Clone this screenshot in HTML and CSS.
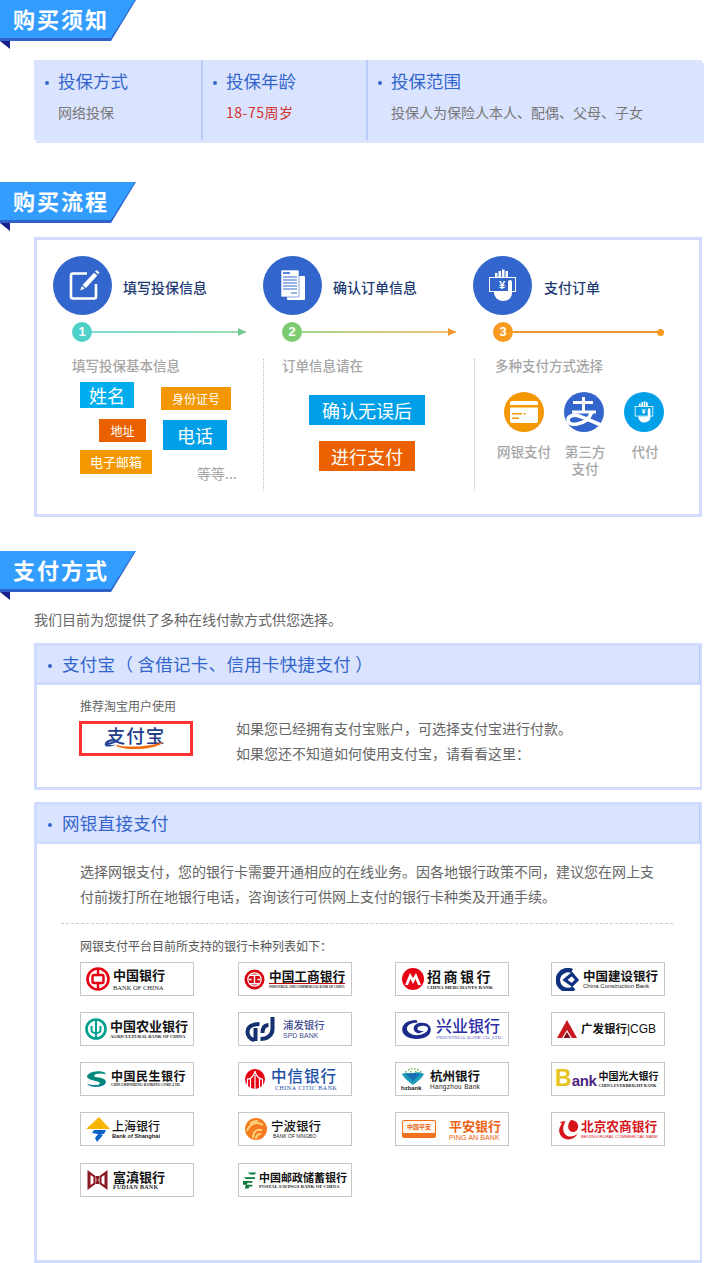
FILE: index.html
```html
<!DOCTYPE html>
<html lang="zh">
<head>
<meta charset="utf-8">
<title>购买须知</title>
<link rel="stylesheet" href="styles.css">
</head>
<body>
<section class="sec sec-notice">
  <div class="ribbon"><h2 class="ribbon-face">购买须知</h2></div>
  <div class="fold"></div>
  <div class="info">
    <div class="info-col c1"><h3 class="info-title"><i class="dot"></i>投保方式</h3><p class="info-text">网络投保</p></div>
    <div class="info-col c2"><h3 class="info-title"><i class="dot"></i>投保年龄</h3><p class="info-text red">18-75周岁</p></div>
    <div class="info-col c3"><h3 class="info-title"><i class="dot"></i>投保范围</h3><p class="info-text">投保人为保险人本人、配偶、父母、子女</p></div>
  </div>
</section>

<section class="sec sec-flow">
  <div class="ribbon"><h2 class="ribbon-face">购买流程</h2></div>
  <div class="fold"></div>
  <div class="flow">
    <div class="step">
      <div class="step-head">
        <div class="circle">
          <svg viewBox="0 0 59 59" width="59" height="59"><path d="M34 17.500H20a2 2 0 0 0-2 2v21a2 2 0 0 0 2 2h21a2 2 0 0 0 2-2V28" fill="none" stroke="#fff" stroke-width="2.600"/><path d="M42 15.500l1.500-1.500 3 2.500-1.500 1.700zM41 16.700l3.300 2.800L33 32l-3.500-3zM28.800 30l3 2.600-4.600 1.900z" fill="#fff"/></svg>
        </div>
        <b class="step-title">填写投保信息</b>
      </div>
      <div class="progress">
        <span class="num n1">1</span><span class="line l1"><i class="arrow a1"></i></span>
      </div>
      <div class="step-body first">
        <p class="step-sub">填写投保基本信息</p>
        <span class="tag t-name">姓名</span>
        <span class="tag t-id">身份证号</span>
        <span class="tag t-addr">地址</span>
        <span class="tag t-tel">电话</span>
        <span class="tag t-mail">电子邮箱</span>
        <span class="etc">等等...</span>
      </div>
    </div>
    <div class="step">
      <div class="step-head">
        <div class="circle">
          <svg viewBox="0 0 59 59" width="59" height="59"><rect x="24" y="20" width="18" height="24" rx="1" fill="#fff"/><rect x="18" y="14" width="18" height="27" rx="1" fill="#fff" stroke="#3366cc" stroke-width=".6"/><path d="M20 17h7" stroke="#3366cc" stroke-width="1.600"/><path d="M20 21h14M20 24h14M20 27h14M20 30h14M20 33h14M28 37h6" stroke="#3366cc" stroke-width="1"/></svg>
        </div>
        <b class="step-title">确认订单信息</b>
      </div>
      <div class="progress">
        <span class="num n2">2</span><span class="line l2"><i class="arrow a2"></i></span>
      </div>
      <div class="step-body">
        <p class="step-sub">订单信息请在</p>
        <div class="confirm">
          <span class="btn b-confirm">确认无误后</span>
          <span class="btn b-pay">进行支付</span>
        </div>
      </div>
    </div>
    <div class="step">
      <div class="step-head">
        <div class="circle">
          <svg viewBox="0 0 59 59" width="59" height="59"><path d="M22 21v-4h2.500v4zM25.500 21v-6H28v6zM29 21v-7.500h2.500V21zM32.500 21v-6H35v6z" fill="#fff"/><rect x="16.500" y="21.500" width="26" height="14" fill="none" stroke="#fff" stroke-width="1"/><path d="M21 36h14V26a2 2 0 0 1 4 0v11c0 5-4 8-9 8s-9-4-9-9z" fill="#fff"/><text x="29" y="33" class="yen">¥</text></svg>
        </div>
        <b class="step-title title-pay">支付订单</b>
      </div>
      <div class="progress p3">
        <span class="num n3">3</span><span class="line l3"><i class="enddot"></i></span>
      </div>
      <div class="step-body last">
        <p class="step-sub">多种支付方式选择</p>
        <div class="methods">
          <div class="method m1">
            <svg viewBox="0 0 40 40" width="40" height="40"><circle cx="20" cy="20" r="20" fill="#f39800"/><rect x="6" y="9" width="28" height="22" rx="2" fill="#fff"/><path d="M6 13h28v2.500H6z" fill="#f39800"/><path d="M8 21h10v1.500H8zM19.500 21h2v1.500h-2zM8 25.500h7V27H8z" fill="#f39800"/></svg>
            <span class="m-label">网银支付</span>
          </div>
          <div class="method m2">
            <svg viewBox="0 0 40 40" width="40" height="40"><circle cx="20" cy="20" r="20" fill="#3366cc"/><g fill="none" stroke="#fff"><path d="M9 10.500h20" stroke-width="3"/><path d="M19.500 5v15M8 20h24" stroke-width="3"/><path d="M28 20c-3 7-8 11-15 12-6 1-9-1-9-4 0-4 6-6 11-4 6 2 15 6 24 10" stroke-width="3.600"/></g></svg>
            <span class="m-label">第三方<br>支付</span>
          </div>
          <div class="method m3">
            <svg viewBox="0 0 40 40" width="40" height="40"><circle cx="20" cy="20" r="20" fill="#00a0e9"/><g transform="scale(.678)"><path d="M22 21v-4h2.500v4zM25.500 21v-6H28v6zM29 21v-7.500h2.500V21zM32.500 21v-6H35v6z" fill="#fff"/><rect x="16.500" y="21.500" width="26" height="14" fill="none" stroke="#fff" stroke-width="1.200"/><path d="M21 36h14V26a2 2 0 0 1 4 0v11c0 5-4 8-9 8s-9-4-9-9z" fill="#fff"/><text x="29" y="33" class="yen">¥</text></g></svg>
            <span class="m-label">代付</span>
          </div>
        </div>
      </div>
    </div>
  </div>
</section>

<section class="sec sec-pay">
  <div class="ribbon"><h2 class="ribbon-face">支付方式</h2></div>
  <div class="fold"></div>
  <p class="pay-intro">我们目前为您提供了多种在线付款方式供您选择。</p>

  <div class="paybox alipay">
    <h3 class="paybox-head"><i class="dot"></i>支付宝（ 含借记卡、信用卡快捷支付 ）</h3>
    <div class="alipay-body">
      <div class="alipay-left">
        <p class="alipay-note">推荐淘宝用户使用</p>
        <div class="alipay-logo">
          <span class="alipay-word">支付宝</span>
          <svg class="swoosh" viewBox="0 0 68 12" width="64" height="11"><path d="M14 7c8 4 32 3 52-3-8 8-38 11-52 5z" fill="#f26a10"/><path d="M14 3C8-1 1 3 1 7c0 3 5 3 13 0-6 1-9 1-9-1 0-2 4-3 9-1z" fill="#24489a"/></svg>
        </div>
      </div>
      <div class="alipay-text">
        <p>如果您已经拥有支付宝账户，可选择支付宝进行付款。</p>
        <p>如果您还不知道如何使用支付宝，请看看这里：</p>
      </div>
    </div>
  </div>

  <div class="paybox netbank">
    <h3 class="paybox-head"><i class="dot"></i>网银直接支付</h3>
    <p class="net-text">选择网银支付，您的银行卡需要开通相应的在线业务。因各地银行政策不同，建议您在网上支付前拨打所在地银行电话，咨询该行可供网上支付的银行卡种类及开通手续。</p>
    <p class="net-list">网银支付平台目前所支持的银行卡种列表如下：</p>
    <div class="banks">
      <div class="bank boc">
        <svg viewBox="0 0 24 24" width="24" height="24"><circle cx="12" cy="12" r="10.500" fill="none" stroke="#e60012" stroke-width="2.600"/><rect x="6.500" y="8" width="11" height="8" rx="1.500" fill="none" stroke="#e60012" stroke-width="2.400"/><path d="M12 1v7M12 16v7" stroke="#e60012" stroke-width="2.400"/></svg>
        <div class="b-text"><b class="cn">中国银行</b><span class="en">BANK OF CHINA</span></div>
      </div>
      <div class="bank icbc">
        <svg viewBox="0 0 22 22" width="21" height="21"><circle cx="11" cy="11" r="10.500" fill="#d7000f"/><circle cx="11" cy="11" r="7" fill="none" stroke="#fff" stroke-width="1.300"/><path d="M6 6.500h10M11 6.500v9M6 15.500h10M5 11h3M14 11h3" stroke="#fff" stroke-width="1.500" fill="none"/></svg>
        <div class="b-text"><b class="cn">中国工商银行</b><span class="en rule">INDUSTRIAL AND COMMERCIAL BANK OF CHINA</span></div>
      </div>
      <div class="bank cmb">
        <svg viewBox="0 0 22 22" width="22" height="22"><circle cx="11" cy="11" r="11" fill="#e60012"/><path d="M3 17L8 5l3 5 3-5 5 12h-3l-2.500-6-2.500 5-2.500-5L6 17z" fill="#fff"/></svg>
        <div class="b-text"><b class="cn">招商银行</b><span class="en">CHINA MERCHANTS BANK</span></div>
      </div>
      <div class="bank ccb">
        <svg viewBox="0 0 23 23" width="23" height="23"><path d="M16 3A10 10 0 1 0 18 20" fill="none" stroke="#0f2f7f" stroke-width="4.500"/><path d="M16 6l-7 6 7 5 5-5z" fill="none" stroke="#0f2f7f" stroke-width="3.200"/></svg>
        <div class="b-text"><b class="cn">中国建设银行</b><span class="en sans">China Construction Bank</span></div>
      </div>

      <div class="bank abc">
        <svg viewBox="0 0 22 22" width="22" height="22"><circle cx="11" cy="11" r="9.500" fill="none" stroke="#00a08e" stroke-width="2.600"/><path d="M11 2v19M6.500 8v4c0 2 2 3 4.500 3s4.500-1 4.500-3V8" fill="none" stroke="#00a08e" stroke-width="2"/></svg>
        <div class="b-text"><b class="cn">中国农业银行</b><span class="en">AGRICULTURAL BANK OF CHINA</span></div>
      </div>
      <div class="bank spd">
        <svg viewBox="0 0 30 26" width="31" height="26"><g fill="none" stroke="#14306e" stroke-width="4"><path d="M9 24C4 23 2 19 2 16 2 10 8 8 14 8"/><path d="M10 12V25"/><path d="M27 1V13C27 19 22 23 15 23"/><path d="M23 9C19 9 17 12 17 17"/></g></svg>
        <div class="b-text"><span class="cn thin">浦发银行</span><span class="en sans">SPD BANK</span></div>
      </div>
      <div class="bank cib">
        <svg viewBox="0 0 32 22" width="31" height="21"><path d="M16 1C7 1 1 5 1 11s7 10 15 10c9 0 15-4 15-10 0-4-4-7-9-7-5 0-9 2-9 6 0 3 3 5 6 5l6-3c-2 1-8 1-8-2 0-2 3-3 6-3 2 0 5 1 5 3 0 4-6 7-12 7-5 0-10-3-10-7s5-6 11-6z" fill="#1c2a8c"/></svg>
        <div class="b-text"><b class="cn">兴业银行</b><span class="en">INDUSTRIAL BANK CO.,LTD.</span></div>
      </div>
      <div class="bank cgb">
        <svg viewBox="0 0 20 18" width="20" height="18"><path d="M10 0l10 18h-5l-5-8-5 8H0z" fill="#c8161d"/><path d="M10 12l3.500 6h-7z" fill="#7a1214"/></svg>
        <div class="b-text"><b class="cn">广发银行<span class="cgb-en">|CGB</span></b></div>
      </div>

      <div class="bank cmbc">
        <svg viewBox="0 0 22 16" width="21" height="16"><path d="M1 5C3 1 9 0 14 0c3 0 6 1 7 3-3-1-8-1-11 0-2 1-2 2 0 3l6 1c4 1 6 3 4 6-2 2-6 3-10 3-4 0-7-1-9-3 4 1 9 2 12 1 2-1 2-2 0-3L6 9C3 8 1 7 1 5z" fill="#00897b"/><path d="M1 13c4 2 10 3 14 2 3-1 5-3 5-5 2 3-2 6-9 6-4 0-8-1-10-3z" fill="#1777bd"/></svg>
        <div class="b-text"><b class="cn">中国民生银行</b><span class="en">CHINA MINSHENG BANKING CORP.,LTD.</span></div>
      </div>
      <div class="bank citic">
        <svg viewBox="0 0 20 20" width="20" height="20"><circle cx="10" cy="10" r="10" fill="#e60012"/><path d="M5.500 20V9M10 20V6M14.500 20V9M2.500 17V10C5 10 9 8 10 2c1 6 5 8 7.500 8v7" fill="none" stroke="#fff" stroke-width="1.200"/></svg>
        <div class="b-text"><b class="cn">中信银行</b><span class="en">CHINA CITIC BANK</span></div>
      </div>
      <div class="bank hz">
        <div class="hz-mark">
          <svg viewBox="0 0 24 18" width="24" height="18"><path d="M1 7c4-2 7 0 11-1s7-1 11 1c-2 4-7 8-11 11C8 15 3 11 1 7z" fill="#1b9bb5"/><path d="M5 7c4-1 10-1 14 0l-7 7z" fill="#1870b8"/><path d="M4 4h1.500v1.500H4zM7 2h1.500v1.500H7zM10 1h1.500v1.500H10zM13 1h1.500v1.500H13zM16 2h1.500v1.500H16zM19 4h1.500v1.500H19zM9 4h1.500v1.500H9zM14 4h1.500v1.500H14z" fill="#65c24a"/></svg>
          <span class="hz-en">hzbank</span>
        </div>
        <div class="b-text"><b class="cn">杭州银行</b><span class="en sans">Hangzhou Bank</span></div>
      </div>
      <div class="bank ceb">
        <span class="ceb-mark"><b class="ceb-b">B</b><b class="ceb-ank">ank</b></span>
        <div class="b-text"><b class="cn">中国光大银行</b><span class="en">CHINA EVERBRIGHT BANK</span></div>
      </div>

      <div class="bank shb">
        <svg viewBox="0 0 24 25" width="24" height="25"><path d="M13 0l11 12H0z" fill="#f8b500"/><path d="M8 13h12l-2 4h-4l3 1-6 7-2-4 3-4-6-1z" fill="#0b62c4"/></svg>
        <div class="b-text"><b class="cn thin">上海银行</b><span class="en sans">Bank of Shanghai</span></div>
      </div>
      <div class="bank nbcb">
        <svg viewBox="0 0 22 22" width="22" height="22"><circle cx="11" cy="11" r="11" fill="#f47b20"/><path d="M2 13c3-8 10-10 16-6M8 20c0-6 3-9 9-8M11 21c0-4 2-5 5-5M5 6c2-2 5-3 8-3" fill="none" stroke="#ffd27a" stroke-width="2"/></svg>
        <div class="b-text"><b class="cn thin">宁波银行</b><span class="en sans">BANK OF NINGBO</span></div>
      </div>
      <div class="bank pab">
        <div class="pab-mark"><span class="pab-cn">中国平安</span></div>
        <div class="b-text"><b class="cn">平安银行</b><span class="en sans">PING AN BANK</span></div>
      </div>
      <div class="bank bjr">
        <svg viewBox="0 0 23 23" width="23" height="23"><path d="M9 3c-6 3-9 9-5 15 4 5 13 5 17-3-3 4-10 5-13 1-3-4-2-9 1-13zM14 2c-3 3-4 8-1 11 3 2 7 1 8-3 1-4-2-8-7-8zM3 4l5-1-3 3z" fill="#d7141a"/></svg>
        <div class="b-text"><b class="cn">北京农商银行</b><span class="en sans">BEIJING RURAL COMMERCIAL BANK</span></div>
      </div>

      <div class="bank fud">
        <svg viewBox="0 0 20 20" width="21" height="20"><path d="M0 0l8 6v8l-8 6zM20 0l-8 6v8l8 6zM3 5v10l3-2V7zM17 5v10l-3-2V7z" fill="#8a1a24" fill-rule="evenodd"/><path d="M8 6l4 0-1 4 1 4H8l1-4z" fill="#8a1a24"/></svg>
        <div class="b-text"><b class="cn">富滇银行</b><span class="en">FUDIAN BANK</span></div>
      </div>
      <div class="bank psbc">
        <svg viewBox="0 0 14 17" width="13" height="17"><path d="M5 0h9l-1 2H8zM1 5h12v2H3zM0 9h10v2H5l-1 2h6v2H7l-1 2H2l1-4H0z" fill="#0c7a3e"/></svg>
        <div class="b-text"><b class="cn">中国邮政储蓄银行</b><span class="en">POSTAL SAVINGS BANK OF CHINA</span></div>
      </div>
    </div>
  </div>
</section>
</body>
</html>
```

FILE: styles.css
```css
* { box-sizing: border-box; }
html, body { margin: 0; padding: 0; }
body {
  width: 704px;
  height: 1263px;
  overflow: hidden;
  background: #fff;
  font-family: "Noto Sans CJK SC", "Liberation Sans", sans-serif;
  color: #666;
}
h2, h3, p { margin: 0; font-weight: normal; }

.sec-flow { margin-top: 42px; }
.sec-pay { margin-top: 34px; }

/* ribbons */
.ribbon {
  width: 136px;
  height: 41px;
  background: #2f62c9;
  clip-path: polygon(0 0, 136px 0, 111px 41px, 0 41px);
}
.ribbon-face {
  width: 135px;
  height: 38px;
  background: #339cff;
  clip-path: polygon(0 0, 135px 0, 111px 38px, 0 38px);
  padding-left: 13px;
  font-size: 22px;
  line-height: 37px;
  font-weight: 700;
  letter-spacing: 2px;
  color: #fff;
  white-space: nowrap;
}
.fold {
  width: 10px;
  height: 8px;
  background: #16208a;
  clip-path: polygon(0 0, 100% 0, 100% 100%);
}

/* notice */
.dot {
  display: inline-block;
  width: 4px;
  height: 4px;
  border-radius: 50%;
  background: #3366cc;
  vertical-align: middle;
}
.info {
  margin: 11px 0 0 34px;
  width: 668px;
  height: 80px;
  display: flex;
  background: #dbe4ff;
  box-shadow: 2px 3px 0 #dbe4ff;
}
.info-col { padding: 8px 0 0 11px; border-right: 2px solid #bccbf7; }
.c1 { width: 169px; }
.c2 { width: 165px; padding-left: 10px; }
.c3 { flex: 1; border-right: 0; padding-left: 10px; }
.info-title { font-size: 17.500px; line-height: 26px; color: #3366cc; white-space: nowrap; }
.info-title .dot { margin-right: 9px; }
.info-text { margin: 8px 0 0 13px; font-size: 14px; line-height: 20px; color: #777; white-space: nowrap; }
.red { color: #d5312f; letter-spacing: .5px; }

/* flow */
.flow {
  margin: 6px 0 0 34px;
  width: 668px;
  height: 280px;
  border: 3px solid #d0dbff;
  padding: 16px 0 0 16px;
  display: flex;
}
.step { width: 210px; }
.step-head { display: flex; align-items: center; gap: 11px; }
.circle { width: 59px; height: 59px; border-radius: 50%; background: #3366cc; flex: none; }
.circle svg { display: block; }
.yen { font: 700 11px "Liberation Sans", sans-serif; fill: #fff; text-anchor: middle; }
.step-title { font-size: 14px; line-height: 20px; color: #1d3a72; margin-top: 3px; font-weight: 500; }
.title-pay { margin-left: 1px; }
.progress { margin: 7px 0 0 19px; height: 20px; display: flex; align-items: center; }
.p3 { margin-left: 20px; }
.num {
  width: 20px; height: 20px; border-radius: 50%; flex: none;
  color: #fff; font: 700 13px/20px "Liberation Sans", sans-serif; text-align: center;
}
.n1 { background: #4fd0c9; }
.n2 { background: #7dcb70; }
.n3 { background: #f79a1e; }
.line { height: 2px; width: 154px; display: flex; justify-content: flex-end; align-items: center; }
.l1 { background: linear-gradient(90deg, #7fdccf, #9bdcb0); }
.l2 { background: linear-gradient(90deg, #a3d98f, #f5bc72); }
.l3 { background: #f0982f; width: 151px; }
.arrow { width: 0; height: 0; border-left: 8px solid; border-top: 4px solid transparent; border-bottom: 4px solid transparent; flex: none; }
.a1 { border-left-color: #72c98f; }
.a2 { border-left-color: #f0962c; }
.enddot { width: 7px; height: 7px; border-radius: 50%; background: #f79a1e; flex: none; }

.step-body {
  position: relative;
  margin-top: 17px;
  height: 131px;
  border-left: 1px dotted #bbb;
  padding-left: 18px;
}
.step-body.first { border-left: 0; padding-left: 19px; }
.step-body.last { margin-left: 1px; padding-left: 20px; }
.step-sub { font-size: 13.500px; line-height: 13px; color: #a6a6a6; font-weight: 500; }

.tag { position: absolute; color: #fff; text-align: center; white-space: nowrap; }
.t-name { left: 27px; top: 23px; width: 54px; height: 26px; background: #00aeef; font-size: 18px; line-height: 26px; }
.t-id { left: 108px; top: 28px; width: 70px; height: 23px; background: #f39800; font-size: 12px; line-height: 23px; }
.t-addr { left: 46px; top: 60px; width: 47px; height: 23px; background: #eb6100; font-size: 12px; line-height: 23px; }
.t-tel { left: 110px; top: 61px; width: 64px; height: 30px; background: #00a0e9; font-size: 18px; line-height: 30px; }
.t-mail { left: 27px; top: 91px; width: 72px; height: 24px; background: #f39800; font-size: 13px; line-height: 24px; }
.etc { position: absolute; left: 144px; top: 105px; font-size: 14px; line-height: 18px; color: #a6a6a6; }

.confirm { margin-top: 23px; display: flex; flex-direction: column; align-items: flex-start; }
.btn { color: #fff; height: 30px; font-size: 18px; line-height: 30px; text-align: center; }
.b-confirm { margin-left: 27px; width: 116px; background: #00a0e9; }
.b-pay { margin: 16px 0 0 37px; width: 96px; background: #eb6100; }

.methods { margin-top: 20px; display: flex; }
.method { display: flex; flex-direction: column; align-items: center; }
.method svg { display: block; }
.m1 { margin-left: -5px; width: 68px; }
.m2 { width: 52px; }
.m3 { width: 68px; }
.m-label { margin-top: 11px; font-size: 13.500px; line-height: 17px; color: #a6a6a6; text-align: center; font-weight: 500; }
.m2 .m-label, .m3 .m-label { margin-left: 2px; }

/* payment */
.pay-intro { margin: 9px 0 0 34px; font-size: 14px; line-height: 20px; color: #666; white-space: nowrap; }
.paybox { margin: 14px 0 0 34px; width: 668px; border: 3px solid #d0dbff; border-right-width: 2px; }
.netbank { margin-top: 12px; height: 461px; }
.alipay { height: 147px; }
.paybox-head {
  height: 39px;
  background: #dbe4ff;
  border-bottom: 3px solid #cfdaff;
  border-right: 1px solid #b9c8f6;
  padding-left: 11px;
  font-size: 17.500px;
  line-height: 35px;
  color: #3366cc;
  white-space: nowrap;
  letter-spacing: .3px;
}
.paybox-head .dot { margin-right: 10px; }
.alipay-body { display: flex; padding: 12px 0 0 43px; }
.alipay-left { width: 156px; }
.alipay-note { font-size: 12px; line-height: 18px; color: #666; white-space: nowrap; }
.alipay-logo {
  margin: 6px 0 0 -1px;
  width: 114px;
  height: 35px;
  border: 3px solid #ff3333;
  position: relative;
  display: flex;
  justify-content: center;
}
.alipay-word { font-size: 18.500px; line-height: 23px; font-weight: 500; color: #243e8c; letter-spacing: 1px; }
.swoosh { position: absolute; left: 21px; top: 14px; }
.alipay-text { padding-top: 19px; }
.alipay-text p { font-size: 14px; line-height: 25px; color: #666; white-space: nowrap; }
.net-text {
  margin: 15px 0 0 43px;
  width: 577px;
  padding-bottom: 13px;
  font-size: 14px;
  line-height: 25px;
  color: #666;
}
.net-text::after {
  content: "";
  display: block;
  margin: 14px 0 0 -19px;
  width: 612px;
  border-top: 1px dashed #ccc;
}
.net-list { margin: 0 0 0 43px; font-size: 12px; line-height: 18px; color: #555; }

.banks {
  margin: 7px 0 0 43px;
  display: grid;
  grid-template-columns: 158px 157px 156px 114px;
  grid-template-rows: 50px 50px 50px 51px 34px;
}
.bank {
  height: 34px;
  width: 114px;
  display: flex;
  align-items: center;
  gap: 3px;
  padding-left: 5px;
  background: #fff;
  border: 1px solid #c6c6c6;
  overflow: hidden;
}
.bank svg { flex: none; display: block; }
.b-text { display: flex; flex-direction: column; white-space: nowrap; color: #111; }
.cn { font-size: 12px; line-height: 13px; font-weight: 700; }
.cn.thin { font-weight: 500; }
.en { font-family: "Liberation Serif", serif; font-size: 5px; line-height: 7px; font-weight: 700; color: #222; }
.en.sans { font-family: "Liberation Sans", sans-serif; font-weight: 400; }

.boc .cn { font-size: 13px; }
.boc .en { font-size: 6.500px; font-weight: 400; margin-top: 3px; }
.icbc { gap: 4px; }
.icbc .cn { font-size: 12.700px; line-height: 14px; }
.icbc .en { font-size: 3.100px; line-height: 6px; border-top: 1px solid #b00; }
.cmb { padding-left: 6px; }
.cmb .cn { font-size: 14px; letter-spacing: 2.500px; line-height: 16px; }
.cmb .en { font-size: 5px; }
.ccb { padding-left: 4px; gap: 4px; }
.ccb .cn { font-size: 12.500px; line-height: 14px; }
.ccb .en { font-size: 6px; }
.abc { padding-left: 4px; }
.abc .cn { font-size: 13px; line-height: 15px; }
.abc .en { font-size: 4.600px; }
.spd { padding-left: 6px; gap: 7px; }
.spd .cn { font-size: 10.400px; color: #3e4b8c; line-height: 13px; }
.spd .en { font-size: 7px; line-height: 9px; color: #3e4b8c; }
.cib { padding-left: 5px; gap: 4px; }
.cib .cn { font-size: 16px; line-height: 17px; color: #2b2fa6; font-weight: 500; }
.cib .en { font-size: 5px; color: #5a5fc0; font-weight: 400; }
.cgb { padding-left: 5px; gap: 4px; }
.cgb .cn { font-size: 11.500px; }
.cgb-en { font-family: "Liberation Sans", sans-serif; font-weight: 400; font-size: 12px; }
.cmbc { padding-left: 5px; gap: 4px; }
.cmbc .cn { font-size: 12px; letter-spacing: .5px; }
.cmbc .en { font-size: 3.500px; }
.citic { padding-left: 6px; gap: 6px; }
.citic .cn { font-size: 15.500px; line-height: 17px; color: #1b4fa8; letter-spacing: 1px; font-weight: 500; }
.citic .en { font-size: 6px; color: #1b4fa8; font-weight: 400; letter-spacing: .5px; padding-left: 4px; margin-top: 1px; }
.hz { padding-left: 5px; gap: 5px; }
.hz-mark { display: flex; flex-direction: column; width: 24px; }
.hz-en { font: 700 6px/7px "Liberation Sans", sans-serif; color: #222; }
.hz .cn { font-size: 12.500px; line-height: 15px; }
.hz .en { font-size: 6.500px; letter-spacing: .3px; }
.ceb { padding-left: 3px; gap: 2px; }
.ceb-mark { white-space: nowrap; font-family: "Liberation Sans", sans-serif; line-height: 24px; }
.ceb-b { font-size: 23px; color: #e8c420; }
.ceb-ank { font-size: 15px; color: #4b2480; letter-spacing: -.3px; }
.ceb .cn { font-size: 10px; line-height: 12px; }
.ceb .en { font-size: 4.300px; }
.shb { padding-left: 5px; gap: 2px; }
.shb .cn { font-size: 12px; line-height: 14px; }
.shb .en { font-size: 5.700px; font-weight: 700; }
.nbcb { padding-left: 6px; gap: 4px; }
.nbcb .cn { font-size: 12.500px; line-height: 14px; }
.nbcb .en { font-size: 5px; padding-left: 2px; }
.pab { padding-left: 6px; gap: 13px; }
.pab-mark {
  width: 34px; height: 18px; flex: none;
  background: #f0701e; border-radius: 2px;
  color: #fff; text-align: center;
}
.pab-cn { display: block; background: #fff6ee; color: #e8641a; margin: 1px 1px 0; height: 12px; font-size: 6px; line-height: 12px; border-radius: 1px; font-weight: 700; }
.pab .cn { font-size: 13px; line-height: 15px; color: #ee6414; }
.pab .en { font-size: 7.200px; color: #ee6414; margin-top: 1px; }
.bjr { padding-left: 5px; gap: 1px; }
.bjr .cn { font-size: 12.700px; line-height: 15px; color: #d7141a; }
.bjr .en { font-size: 4.400px; color: #d7141a; }
.fud { padding-left: 6px; gap: 5px; }
.fud .cn { font-size: 13px; line-height: 15px; }
.fud .en { font-size: 6px; letter-spacing: .3px; }
.psbc { padding-left: 4px; gap: 3px; }
.psbc .cn { font-size: 11px; line-height: 13px; }
.psbc .en { font-size: 4.800px; line-height: 6px; }
```
